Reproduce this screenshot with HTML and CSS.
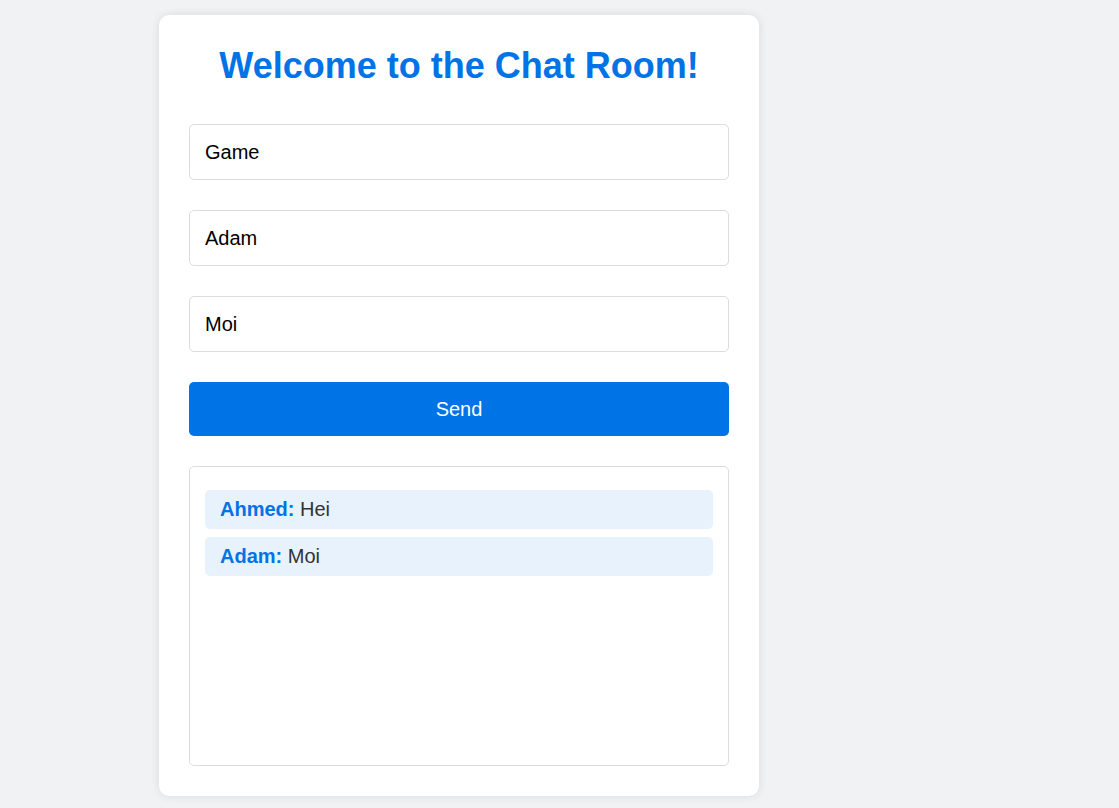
FILE: index.html
```html
<!DOCTYPE html>
<html lang="en">
<head>
<meta charset="utf-8">
<title>Chat Room</title>
<link rel="stylesheet" href="styles.css">
</head>
<body>
<div class="card">
  <h1 class="title">Welcome to the Chat Room!</h1>
  <div class="form">
    <input class="field" type="text" value="Game">
    <input class="field" type="text" value="Adam">
    <input class="field" type="text" value="Moi">
    <button class="send">Send</button>
  </div>
  <div class="messages">
    <div class="msg"><span class="name">Ahmed:</span> Hei</div>
    <div class="msg"><span class="name">Adam:</span> Moi</div>
  </div>
</div>
</body>
</html>
```
FILE: styles.css
```css
html, body {
  margin: 0;
  padding: 0;
}
body {
  background: #f1f2f4;
  font-family: "Liberation Sans", Arial, sans-serif;
  padding: 15px 0 12px 159px;
}
.card {
  width: 600px;
  box-sizing: border-box;
  background: #fff;
  border-radius: 10px;
  box-shadow: 0 0 10px rgba(0, 0, 0, 0.1);
  padding: 30px;
}
.title {
  margin: 0 0 38px;
  text-align: center;
  color: #0073e6;
  font-size: 36px;
  font-weight: bold;
  line-height: 41px;
}
.form {
  display: flex;
  flex-direction: column;
  gap: 30px;
}
.field {
  display: block;
  width: 100%;
  height: 56px;
  box-sizing: border-box;
  border: 1px solid #dcdcdc;
  border-radius: 5px;
  padding: 0 15px;
  font-family: "Liberation Sans", Arial, sans-serif;
  font-size: 20px;
  color: #000;
  background: #fff;
  outline: none;
}
.send {
  display: block;
  width: 100%;
  height: 54px;
  border: none;
  border-radius: 5px;
  background: #0073e6;
  color: #fff;
  font-family: "Liberation Sans", Arial, sans-serif;
  font-size: 20px;
  cursor: pointer;
}
.messages {
  margin-top: 30px;
  height: 300px;
  box-sizing: border-box;
  border: 1px solid #dcdcdc;
  border-radius: 5px;
  padding: 15px;
}
.msg {
  margin: 8px 0;
  padding: 8px 15px;
  background: #e8f2fd;
  border-radius: 5px;
  font-size: 20px;
  line-height: 23px;
  color: #333;
}
.name {
  color: #0073e6;
  font-weight: bold;
}
```
